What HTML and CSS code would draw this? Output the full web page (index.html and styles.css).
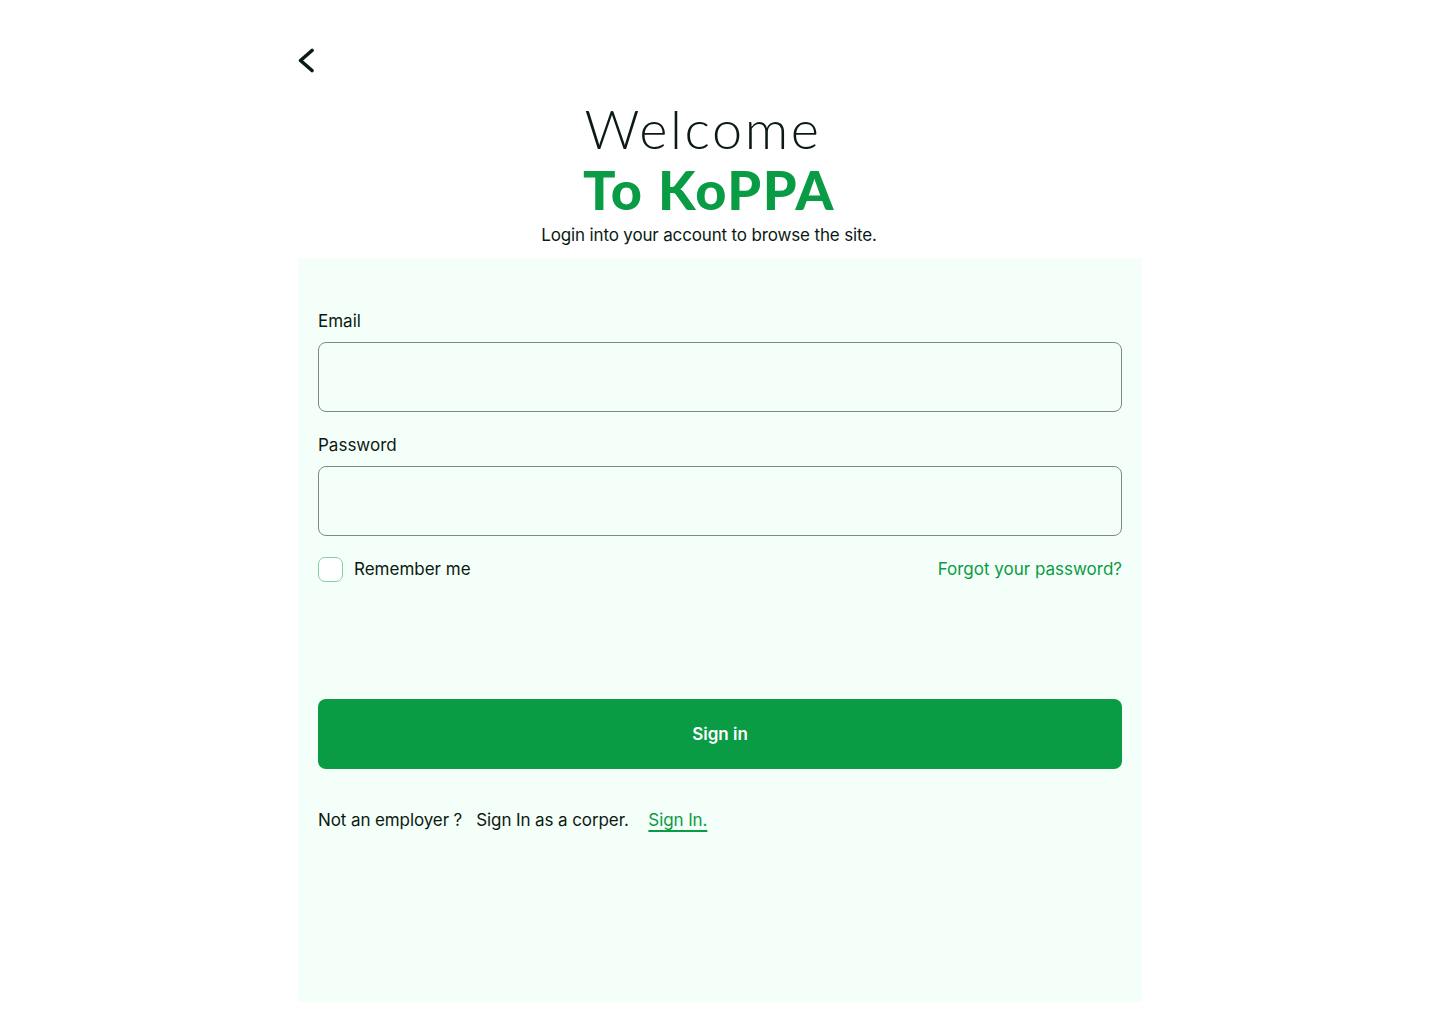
FILE: index.html
```html
<!DOCTYPE html>
<html lang="en">
<head>
<meta charset="utf-8">
<title>Login - KoPPA</title>
<link rel="stylesheet" href="styles.css">
</head>
<body>
<main class="page">
  <a class="back" href="#" aria-label="Back">
    <svg width="22" height="26" viewBox="0 0 22 26" fill="none"><path d="M16 2.5 L4.5 12.5 L16 22.5" stroke="#0b1a12" stroke-width="3.6" stroke-linecap="round" stroke-linejoin="round"/></svg>
  </a>
  <header class="heading">
    <h1 class="welcome">Welcome</h1>
    <h2 class="brand">To KoPPA</h2>
    <p class="sub">Login into your account to browse the site.</p>
  </header>
  <section class="panel">
    <label class="label" for="email">Email</label>
    <input class="field" id="email" type="email">
    <label class="label" for="password">Password</label>
    <input class="field" id="password" type="password">
    <div class="row">
      <label class="remember"><span class="box"></span>Remember me</label>
      <a class="forgot" href="#">Forgot your password?</a>
    </div>
    <button class="signin" type="button">Sign in</button>
    <p class="alt">Not an employer ?&nbsp;&nbsp; Sign In as a corper. <a class="alt-link" href="#">Sign In.</a></p>
  </section>
</main>
</body>
</html>
```
FILE: styles.css
```css
* { box-sizing: border-box; }
html, body { margin: 0; padding: 0; background: #ffffff; }
body { font-family: "Inter", "Open Sans", sans-serif; color: #0b1a12; }
.page { width: 844px; margin: 0 auto; padding-top: 48px; }
.back { display: block; width: 22px; height: 26px; margin-left: -2px; }
.back svg { display: block; }
.heading { text-align: center; margin-right: 22px; margin-top: 25px; }
.welcome { margin: 0; font-family: "Lato", sans-serif; font-weight: 300; font-size: 54px; line-height: 60px; letter-spacing: 2.6px; color: #0b1a12; padding-right: 12px; }
.brand { margin: 0; font-family: "Lato", sans-serif; font-weight: 900; font-size: 54px; line-height: 62px; letter-spacing: 1.6px; color: #0a9b45; }
.sub { margin: 2px 0 0; font-size: 17px; line-height: 24px; color: #0b1a12; letter-spacing: -0.15px; }
.panel { background: #f5fff9; margin-top: 11px; padding: 52px 20px 0; height: 744px; display: flex; flex-direction: column; }
.label { font-size: 17px; line-height: 22px; color: #0b1a12; }
.field { display: block; width: 100%; height: 70px; margin-top: 10px; margin-bottom: 22px; border: 1px solid #7c8a83; border-radius: 8px; background: transparent; font: inherit; }
.row { display: flex; justify-content: space-between; align-items: center; margin-top: -2px; height: 26px; }
.remember { display: flex; align-items: center; gap: 11px; font-size: 17px; color: #0b1a12; }
.box { width: 25px; height: 25px; border: 1.5px solid #7fd3a0; border-radius: 7px; background: #fff; }
.forgot { font-size: 17px; color: #0a9b45; text-decoration: none; }
.signin { margin-top: 117px; height: 70px; border: 0; border-radius: 8px; background: #0a9b45; color: #fff; font: inherit; font-size: 17px; font-weight: 600; }
.alt { margin: 39px 0 0; font-size: 17px; line-height: 24px; color: #0b1a12; letter-spacing: -0.1px; }
.alt-link { color: #0a9b45; margin-left: 15px; text-decoration: underline; text-underline-offset: 4px; text-decoration-thickness: 1.5px; }
```
